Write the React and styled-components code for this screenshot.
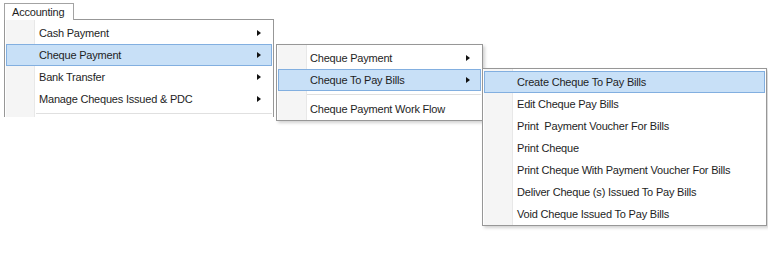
import React from "react";
import styled, { createGlobalStyle } from "styled-components";

const Global = createGlobalStyle`
  html, body { margin: 0; padding: 0; background: #fff; }
  body { width: 768px; height: 266px; overflow: hidden; font-family: "Liberation Sans", Arial, sans-serif; font-size: 11px; letter-spacing: -0.2px; color: #1e1e1e; }
`;

const Stage = styled.div`
  position: relative;
  width: 768px;
  height: 266px;
  padding: 3px 0 0 4px;
  box-sizing: border-box;
`;

const Tab = styled.div`
  position: relative;
  z-index: 2;
  width: 70px;
  height: 17px;
  box-sizing: border-box;
  border: 1px solid #a3a3a3;
  border-bottom: none;
  background: #fff;
  padding-left: 7px;
  display: flex;
  align-items: center;
`;

const Menu = styled.div`
  position: absolute;
  left: ${(p) => p.$x}px;
  top: ${(p) => p.$y}px;
  width: ${(p) => p.$w}px;
  box-sizing: border-box;
  background: #fff;
  border: 1px solid #979797;
  ${(p) => (p.$open ? "border-bottom: none;" : "")}
  box-shadow: ${(p) => (p.$open ? "none" : "2px 2px 3px rgba(0,0,0,0.18)")};
  padding: 1px 1px 0 1px;
  display: flex;
  flex-direction: column;
  z-index: 1;
  &::before {
    content: "";
    position: absolute;
    left: 1px;
    top: 0;
    bottom: 0;
    width: 28px;
    background: #f5f5f5;
    border-right: 1px solid #e8e8e8;
    box-shadow: 1px 0 0 #fff;
  }
`;

const TopGap = styled.div`
  height: 1px;
`;

const Row = styled.div`
  position: relative;
  height: 22px;
  box-sizing: border-box;
  display: flex;
  align-items: center;
  padding-left: ${(p) => p.$indent}px;
  padding-right: 10px;
  border: 1px solid ${(p) => (p.$active ? "#82afe0" : "transparent")};
  background: ${(p) => (p.$active ? "#c8e0f7" : "transparent")};
  white-space: pre;
`;

const Label = styled.span`
  flex: 1;
`;

const Arrow = styled.span`
  width: 0;
  height: 0;
  border-top: 3.5px solid transparent;
  border-bottom: 3.5px solid transparent;
  border-left: 4px solid #111;
`;

const Separator = styled.div`
  position: relative;
  height: 7px;
  display: flex;
  align-items: center;
  padding-left: ${(p) => p.$indent}px;
  &::after {
    content: "";
    flex: 1;
    height: 1px;
    background: #e0e0e0;
    box-shadow: 0 1px 0 #fff;
  }
`;

function Item({ label, active, arrow, indent }) {
  return (
    <Row $active={active} $indent={indent}>
      <Label>{label}</Label>
      {arrow && <Arrow />}
    </Row>
  );
}

export default function App() {
  return (
    <>
      <Global />
      <Stage>
        <Tab>Accounting</Tab>
        <Menu $x={4} $y={19} $w={270} $open>
          <TopGap />
          <Item label="Cash Payment" arrow indent={32} />
          <Item label="Cheque Payment" arrow active indent={32} />
          <Item label="Bank Transfer" arrow indent={32} />
          <Item label="Manage Cheques Issued & PDC" arrow indent={32} />
          <Separator $indent={30} />
        </Menu>
        <Menu $x={276} $y={44} $w={207}>
          <TopGap />
          <Item label="Cheque Payment" arrow indent={31} />
          <Item label="Cheque To Pay Bills" arrow active indent={31} />
          <Separator $indent={29} />
          <Item label="Cheque Payment Work Flow" indent={31} />
        </Menu>
        <Menu $x={482} $y={68} $w={285}>
          <TopGap />
          <Item label="Create Cheque To Pay Bills" active indent={32} />
          <Item label="Edit Cheque Pay Bills" indent={32} />
          <Item label="Print  Payment Voucher For Bills" indent={32} />
          <Item label="Print Cheque" indent={32} />
          <Item label="Print Cheque With Payment Voucher For Bills" indent={32} />
          <Item label="Deliver Cheque (s) Issued To Pay Bills" indent={32} />
          <Item label="Void Cheque Issued To Pay Bills" indent={32} />
        </Menu>
      </Stage>
    </>
  );
}
